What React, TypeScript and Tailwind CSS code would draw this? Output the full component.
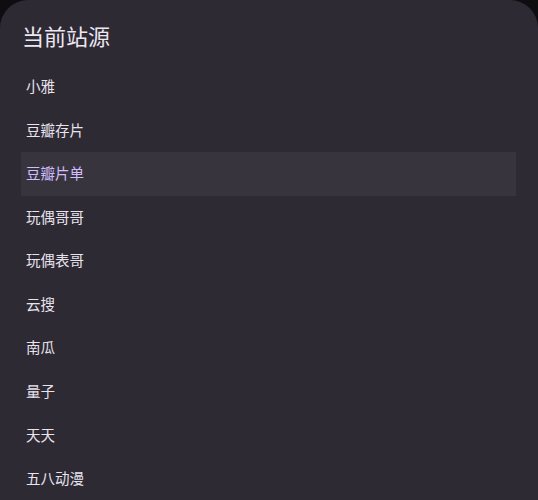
import React from "react";

const items = ["小雅", "豆瓣存片", "豆瓣片单", "玩偶哥哥", "玩偶表哥", "云搜", "南瓜", "量子", "天天", "五八动漫"];

export default function App() {
  return (
    <div className="w-[538px] h-[500px] bg-[#0e0e10] overflow-hidden" style={{ fontFamily: '"Noto Sans", "Noto Sans CJK SC", sans-serif' }}>
      <div className="h-full rounded-t-[28px] bg-[#2d2a34] pt-[22px] px-[21px]">
        <div className="text-[22px] leading-[28px] text-[#ece6f0] pl-[1px] mb-[15px]">当前站源</div>
        <div className="w-[495px] flex flex-col">
          {items.map((t, i) => (
            <div
              key={t}
              className={
                "h-[43.6px] shrink-0 flex items-center pl-[5px] text-[14.5px] " +
                (i === 2 ? "bg-[#37343e] text-[#cfbdfd]" : "text-[#e8e3ec]")
              }
            >
              {t}
            </div>
          ))}
        </div>
      </div>
    </div>
  );
}
